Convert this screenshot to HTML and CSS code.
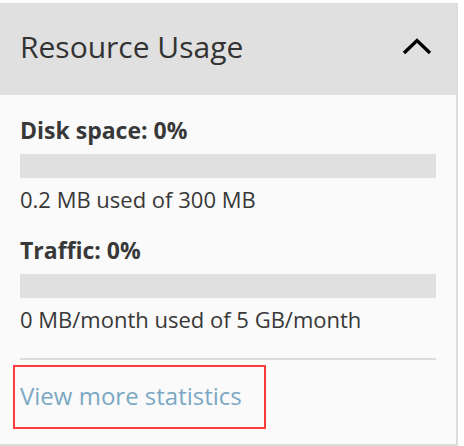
FILE: index.html
```html
<!DOCTYPE html>
<html>
<head>
    <title>Resource Usage</title>
    <link rel="stylesheet" href="styles.css">
</head>
<body>
    <div class="panel">
        <div class="panel-header">
            <h2>Resource Usage</h2>
            <button type="button" class="toggle" aria-label="Collapse">
                <svg width="32" height="18" viewBox="0 0 32 18">
                    <path d="M3 16 L16 3.5 L29 16" fill="none" stroke="#000" stroke-width="3.4"/>
                </svg>
            </button>
        </div>
        <div class="panel-body">
            <div class="stat">
                <h3>Disk space: 0%</h3>
                <div class="bar"><div class="bar-fill" style="width: 0%"></div></div>
                <p>0.2 MB used of 300 MB</p>
            </div>
            <div class="stat">
                <h3>Traffic: 0%</h3>
                <div class="bar"><div class="bar-fill" style="width: 0%"></div></div>
                <p>0 MB/month used of 5 GB/month</p>
            </div>
            <div class="panel-footer">
                <a href="#" class="stats-link">View more statistics</a>
            </div>
        </div>
    </div>
</body>
</html>
```

FILE: styles.css
```css
body {
    margin: 0;
    padding-top: 3px;
    font-family: "Open Sans", Arial, sans-serif;
    color: #383838;
    background: #fff;
}
.panel {
    width: 456px;
    border-right: 2px solid #dcdcdc;
    border-bottom: 2px solid #dcdcdc;
    background: #fafafa;
}
.panel-header {
    height: 92px;
    box-sizing: border-box;
    display: flex;
    align-items: center;
    justify-content: space-between;
    padding: 0 23px 6px 20px;
    background: #e0e0e0;
}
.panel-header h2 {
    margin: 0;
    font-size: 30px;
    font-weight: normal;
    color: #333;
}
.toggle {
    background: none;
    border: none;
    padding: 0;
    display: flex;
    cursor: pointer;
}
.panel-body {
    padding: 20px 20px 15px;
}
.stat + .stat {
    margin-top: 21px;
}
.stat h3 {
    margin: 0;
    font-size: 23px;
    font-weight: bold;
    line-height: 30px;
}
.bar {
    height: 24px;
    margin: 9px 0 6px;
    background: #e0e0e0;
}
.bar-fill {
    height: 100%;
    background: #79a22e;
}
.stat p {
    margin: 0;
    font-size: 22px;
    line-height: 30px;
}
.panel-footer {
    border-top: 2px solid #dcdcdc;
    margin-top: 24px;
    padding-top: 5px;
}
.stats-link {
    display: inline-block;
    margin-left: -7px;
    padding: 13px 22px 15px 5px;
    border: 2px solid #ff3b3b;
    color: #7aa8c4;
    font-size: 24px;
    line-height: 32px;
    text-decoration: none;
}
```
